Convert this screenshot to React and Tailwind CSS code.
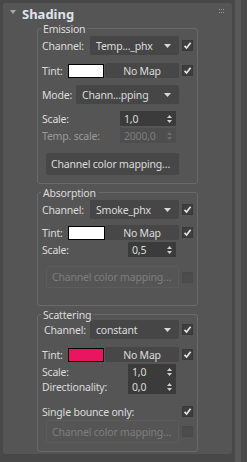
import React from "react";

// 3ds Max style rollout: "Shading"
const FONT = { fontFamily: '"Noto Sans", "Open Sans", sans-serif' };

const Check = ({ on = true, disabled = false }) => (
  <div
    className={`w-[11px] h-[11px] shrink-0 flex items-center justify-center border ${
      disabled ? "bg-[#4c4c4c] border-[#4a4a4a]" : "bg-[#3e3e3e] border-[#393939]"
    }`}
  >
    {on && (
      <svg width="9" height="9" viewBox="0 0 9 9">
        <path d="M1.5 4.8 L3.6 7 L7.6 1.8" fill="none" stroke="#e4e4e4" strokeWidth="1.7" />
      </svg>
    )}
  </div>
);

const Arrow = () => (
  <svg width="7" height="4" viewBox="0 0 7 4" className="shrink-0">
    <path d="M0 0 H7 L3.5 4 Z" fill="#d8d8d8" />
  </svg>
);

const SpinArrows = ({ disabled }) => (
  <div className="flex flex-col gap-[2px] shrink-0">
    <svg width="5" height="3" viewBox="0 0 5 3">
      <path d="M0 3 H5 L2.5 0 Z" fill={disabled ? "#6e6e6e" : "#d0d0d0"} />
    </svg>
    <svg width="5" height="3" viewBox="0 0 5 3">
      <path d="M0 0 H5 L2.5 3 Z" fill={disabled ? "#6e6e6e" : "#d0d0d0"} />
    </svg>
  </div>
);

const Dropdown = ({ value, w }) => (
  <div
    className={`${w} h-[19px] bg-[#464646] rounded-[2px] flex items-center justify-between pl-[6px] pr-[8px] text-[#dcdcdc]`}
  >
    <span className="whitespace-nowrap">{value}</span>
    <Arrow />
  </div>
);

const Spinner = ({ value, w, disabled }) => (
  <div
    className={`${w} h-[15px] rounded-[1px] flex items-center justify-between pl-[4px] pr-[4px] ${
      disabled ? "bg-[#4e4e4e] text-[#7c7c7c]" : "bg-[#3b3b3b] text-[#dcdcdc]"
    }`}
  >
    <span>{value}</span>
    <SpinArrows disabled={disabled} />
  </div>
);

const Swatch = ({ color, w = "w-[36px]" }) => (
  <div className={`${w} h-[14px] border border-black shrink-0`} style={{ background: color }} />
);

const NoMap = () => (
  <div className="w-[74px] h-[15px] bg-[#474747] rounded-[2px] flex items-center justify-center text-[#dcdcdc]">
    No Map
  </div>
);

const ColorMapButton = ({ disabled, h = "h-[22px]" }) => (
  <div
    className={`w-[133px] ${h} rounded-[2px] flex items-center pl-[5px] whitespace-nowrap ${
      disabled
        ? "border border-[#5c5c5c] text-[#7e7e7e]"
        : "bg-[#474747] text-[#dcdcdc]"
    }`}
  >
    Channel color mapping…
  </div>
);

const Group = ({ title, children, className }) => (
  <div className={`relative w-[161px] border border-[#6a6a6a] rounded-[3px] ${className}`}>
    <span className="absolute -top-[6px] left-[3px] px-[2px] bg-[#555555] text-[#dcdcdc] leading-[12px]">
      {title}
    </span>
    {children}
  </div>
);

const TintRow = ({ color, swatchW, className }) => (
  <div className={`h-[15px] flex items-center pl-[4px] ${className}`}>
    <span className="w-[26px] text-[#dcdcdc]">Tint:</span>
    <Swatch color={color} w={swatchW} />
    <div className={swatchW === "w-[37px]" ? "ml-0" : "ml-[1px]"}>
      <NoMap />
    </div>
    <div className="ml-[3px]">
      <Check />
    </div>
  </div>
);

const ChannelRow = ({ value, className, indent = "pl-[4px]", labelW = "w-[48px]" }) => (
  <div className={`h-[19px] flex items-center ${indent} ${className}`}>
    <span className={`${labelW} shrink-0 text-[#dcdcdc]`}>Channel:</span>
    <Dropdown value={value} w="w-[89px]" />
    <div className="ml-[3px]">
      <Check />
    </div>
  </div>
);

const SpinRow = ({ label, value, w, lw, disabled, className }) => (
  <div className={`h-[15px] flex items-center pl-[4px] ${className}`}>
    <span className={`${lw} shrink-0 whitespace-nowrap ${disabled ? "text-[#9a9a9a]" : "text-[#dcdcdc]"}`}>
      {label}
    </span>
    <Spinner value={value} w={w} disabled={disabled} />
  </div>
);

export default function App() {
  return (
    <div
      className="w-[247px] h-[462px] bg-[#484848] flex overflow-hidden text-[10.5px] tracking-[-0.2px] leading-[14px]"
      style={FONT}
    >
      <div className="pl-[3px] pt-[3px]">
        <div className="w-[229px] h-[451px] bg-[#555555] rounded-[3px] flex flex-col">
          {/* title */}
          <div className="h-[25px] flex items-start">
            <svg width="6" height="4" viewBox="0 0 6 4" className="mt-[7px] ml-[7px]">
              <path d="M0 0 H6 L3 4 Z" fill="#a9a9a9" />
            </svg>
            <span className="ml-[6px] mt-[4px] text-[13px] tracking-normal leading-[14px] font-bold text-[#dde3ea]">
              Shading
            </span>
            <div className="ml-auto mr-[8px] mt-[6px] grid grid-cols-3 gap-x-[1px] gap-y-[2px]">
              {[...Array(6)].map((_, i) => (
                <div key={i} className="w-[1px] h-[1px] bg-[#9a9a9a]" />
              ))}
            </div>
          </div>

          <div className="pl-[34px] flex flex-col">
            {/* Emission */}
            <Group title="Emission" className="h-[156px] pt-[7px]">
              <ChannelRow value="Temp..._phx" />
              <TintRow color="#ffffff" swatchW="w-[36px]" className="mt-[8px]" />
              <div className="h-[19px] mt-[7px] flex items-center pl-[4px]">
                <span className="w-[34px] shrink-0 text-[#dcdcdc]">Mode:</span>
                <Dropdown value="Chann...pping" w="w-[103px]" />
              </div>
              <SpinRow label="Scale:" value="1,0" w="w-[56px]" lw="w-[78px]" className="mt-[7px]" />
              <SpinRow
                label="Temp. scale:"
                value="2000,0"
                w="w-[56px]"
                lw="w-[78px]"
                disabled
                className="mt-[2px]"
              />
              <div className="mt-[10px] pl-[8px]">
                <ColorMapButton />
              </div>
            </Group>

            {/* Absorption */}
            <Group title="Absorption" className="h-[114px] pt-[7px] mt-[8px]">
              <ChannelRow value="Smoke_phx" />
              <TintRow color="#ffffff" swatchW="w-[37px]" className="mt-[6px]" />
              <SpinRow label="Scale:" value="0,5" w="w-[48px]" lw="w-[86px]" className="mt-[2px]" />
              <div className="mt-[9px] pl-[8px] flex items-center">
                <ColorMapButton disabled />
                <div className="ml-[3px]">
                  <Check on={false} disabled />
                </div>
              </div>
            </Group>

            {/* Scattering */}
            <Group title="Scattering" className="h-[138px] pt-[5px] mt-[8px]">
              <ChannelRow value="constant" indent="pl-[6px]" labelW="w-[46px]" />
              <TintRow color="#ea1560" swatchW="w-[36px]" className="mt-[8px]" />
              <SpinRow label="Scale:" value="1,0" w="w-[48px]" lw="w-[86px]" className="mt-[2px]" />
              <SpinRow label="Directionality:" value="0,0" w="w-[48px]" lw="w-[86px]" />
              <div className="h-[15px] mt-[10px] flex items-center pl-[4px]">
                <span className="w-[140px] text-[#dcdcdc]">Single bounce only:</span>
                <Check />
              </div>
              <div className="mt-[1px] pl-[8px] flex items-center">
                <ColorMapButton disabled h="h-[23px]" />
                <div className="ml-[3px]">
                  <Check on={false} disabled />
                </div>
              </div>
            </Group>
          </div>
        </div>
      </div>

      {/* scrollbar strip */}
      <div className="ml-[3px] w-[6px] h-full bg-[#585858]" />
      <div className="flex-1 h-full bg-[#4a4a4a]" />
    </div>
  );
}
